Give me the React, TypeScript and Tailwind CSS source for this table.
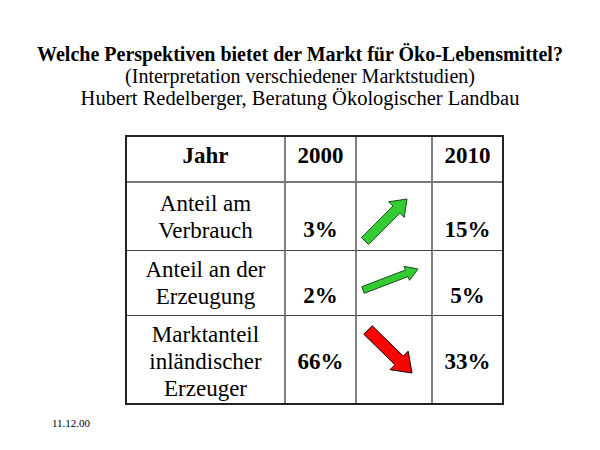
type Pt = [number, number];

// builds the outline of a block arrow going from tail to tip
function arrowPoints(tail: Pt, tip: Pt, sw: number, hw: number, hl: number): string {
  const dx = tip[0] - tail[0];
  const dy = tip[1] - tail[1];
  const len = Math.hypot(dx, dy);
  const ux = dx / len;
  const uy = dy / len;
  const nx = -uy;
  const ny = ux;
  const bx = tip[0] - ux * hl;
  const by = tip[1] - uy * hl;
  const pts: Pt[] = [
    [tail[0] + (nx * sw) / 2, tail[1] + (ny * sw) / 2],
    [bx + (nx * sw) / 2, by + (ny * sw) / 2],
    [bx + (nx * hw) / 2, by + (ny * hw) / 2],
    tip,
    [bx - (nx * hw) / 2, by - (ny * hw) / 2],
    [bx - (nx * sw) / 2, by - (ny * sw) / 2],
    [tail[0] - (nx * sw) / 2, tail[1] - (ny * sw) / 2],
  ];
  return pts.map((p) => p[0].toFixed(1) + "," + p[1].toFixed(1)).join(" ");
}

function Arrow(props: { tail: Pt; tip: Pt; sw: number; hw: number; hl: number; fill: string; stroke: string }) {
  const { tail, tip, sw, hw, hl, fill, stroke } = props;
  return (
    <svg className="block h-full w-full">
      <polygon points={arrowPoints(tail, tip, sw, hw, hl)} fill={fill} stroke={stroke} strokeWidth={1} />
    </svg>
  );
}

export default function App() {
  return (
    <div className="w-[600px] h-[450px] bg-white text-black font-['Liberation_Serif',serif]">
      <div className="pt-[43px] text-center text-[20px] leading-[22px]">
        <div className="font-bold">Welche Perspektiven bietet der Markt für Öko-Lebensmittel?</div>
        <div>(Interpretation verschiedener Marktstudien)</div>
        <div className="text-[20.5px]">Hubert Redelberger, Beratung Ökologischer Landbau</div>
      </div>

      <div className="ml-[125px] mt-[26px] w-[379px] border-2 border-[#222] grid grid-cols-[159px_71px_76px_69px] grid-rows-[46px_68px_65px_87px] text-[23px] leading-[27px]">
        {/* header */}
        <div className="flex items-center justify-center pb-[8px] font-bold border-r-2 border-r-[#808080] border-b-2 border-b-[#777]">
          Jahr
        </div>
        <div className="flex items-center justify-center pb-[8px] font-bold border-r-2 border-r-[#808080] border-b-2 border-b-[#777]">
          2000
        </div>
        <div className="border-r-2 border-r-[#808080] border-b-2 border-b-[#777]" />
        <div className="flex items-center justify-center pb-[8px] font-bold border-b-2 border-b-[#777]">
          2010
        </div>

        {/* Anteil am Verbrauch */}
        <div className="flex flex-col items-center justify-center text-center border-r-2 border-r-[#808080] border-b border-b-[#444]">
          <span>Anteil am</span>
          <span>Verbrauch</span>
        </div>
        <div className="flex items-center justify-center pt-[25px] font-bold border-r-2 border-r-[#808080] border-b border-b-[#444]">
          3%
        </div>
        <div className="border-r-2 border-r-[#808080] border-b border-b-[#444]">
          <Arrow tail={[8, 58]} tip={[50, 16]} sw={10} hw={22} hl={15} fill="#33cc33" stroke="#1d4a1d" />
        </div>
        <div className="flex items-center justify-center pt-[25px] font-bold border-b border-b-[#444]">
          15%
        </div>

        {/* Anteil an der Erzeugung */}
        <div className="flex flex-col items-center justify-center text-center border-r-2 border-r-[#808080] border-b border-b-[#444]">
          <span>Anteil an der</span>
          <span>Erzeugung</span>
        </div>
        <div className="flex items-center justify-center pt-[25px] font-bold border-r-2 border-r-[#808080] border-b border-b-[#444]">
          2%
        </div>
        <div className="border-r-2 border-r-[#808080] border-b border-b-[#444]">
          <Arrow tail={[6, 39]} tip={[61, 18]} sw={7} hw={15} hl={12} fill="#33cc33" stroke="#1d4a1d" />
        </div>
        <div className="flex items-center justify-center pt-[25px] font-bold border-b border-b-[#444]">
          5%
        </div>

        {/* Marktanteil inländischer Erzeuger */}
        <div className="flex flex-col items-center justify-center pt-[4px] text-center border-r-2 border-r-[#808080]">
          <span>Marktanteil</span>
          <span>inländischer</span>
          <span>Erzeuger</span>
        </div>
        <div className="flex items-center justify-center pt-[4px] font-bold border-r-2 border-r-[#808080]">
          66%
        </div>
        <div className="border-r-2 border-r-[#808080]">
          <Arrow tail={[11, 14]} tip={[55, 57]} sw={12} hw={26} hl={18} fill="#ff0000" stroke="#111" />
        </div>
        <div className="flex items-center justify-center pt-[4px] font-bold">33%</div>
      </div>

      <div className="ml-[52px] mt-[12px] text-[11px] leading-[13px]">11.12.00</div>
    </div>
  );
}
